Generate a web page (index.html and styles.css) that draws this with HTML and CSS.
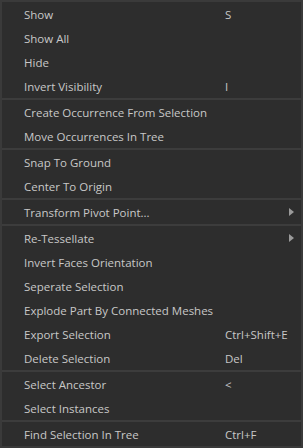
FILE: index.html
```html
<!DOCTYPE html>
<html>
<head>
<meta charset="utf-8">
<link rel="stylesheet" href="styles.css">
</head>
<body>
<div class="menu">
  <div class="item"><span class="label">Show</span><span class="key">S</span></div>
  <div class="item"><span class="label">Show All</span></div>
  <div class="item"><span class="label">Hide</span></div>
  <div class="item"><span class="label">Invert Visibility</span><span class="key">I</span></div>
  <div class="sep"></div>
  <div class="item"><span class="label">Create Occurrence From Selection</span></div>
  <div class="item"><span class="label">Move Occurrences In Tree</span></div>
  <div class="sep"></div>
  <div class="item"><span class="label">Snap To Ground</span></div>
  <div class="item"><span class="label">Center To Origin</span></div>
  <div class="sep"></div>
  <div class="item"><span class="label">Transform Pivot Point...</span><span class="arrow"></span></div>
  <div class="sep"></div>
  <div class="item"><span class="label">Re-Tessellate</span><span class="arrow"></span></div>
  <div class="item"><span class="label">Invert Faces Orientation</span></div>
  <div class="item"><span class="label">Seperate Selection</span></div>
  <div class="item"><span class="label">Explode Part By Connected Meshes</span></div>
  <div class="item"><span class="label">Export Selection</span><span class="key">Ctrl+Shift+E</span></div>
  <div class="item"><span class="label">Delete Selection</span><span class="key">Del</span></div>
  <div class="sep"></div>
  <div class="item"><span class="label">Select Ancestor</span><span class="key">&lt;</span></div>
  <div class="item"><span class="label">Select Instances</span></div>
  <div class="sep"></div>
  <div class="item"><span class="label">Find Selection In Tree</span><span class="key">Ctrl+F</span></div>
</div>
</body>
</html>
```
FILE: styles.css
```css
html, body {
  margin: 0;
  padding: 0;
  background: #2d2d2d;
}
.menu {
  width: 303px;
  height: 448px;
  box-sizing: border-box;
  border: 2px solid #3a3a3a;
  border-top-width: 2px;
  background: #2d2d2d;
  font-family: "Open Sans", "Noto Sans", sans-serif;
  font-size: 11.5px;
  color: #c8c8c8;
  display: flex;
  flex-direction: column;
}
.item {
  height: 24px;
  display: flex;
  align-items: center;
  position: relative;
  padding-left: 22px;
}
.label {
  width: 201px;
  white-space: nowrap;
}
.key {
  white-space: nowrap;
}
.sep {
  height: 2px;
  background: #3c3c3c;
}
.arrow {
  position: absolute;
  right: 7px;
  top: 8px;
  width: 0;
  height: 0;
  border-left: 5px solid #9a9a9a;
  border-top: 4px solid transparent;
  border-bottom: 4px solid transparent;
}
```
